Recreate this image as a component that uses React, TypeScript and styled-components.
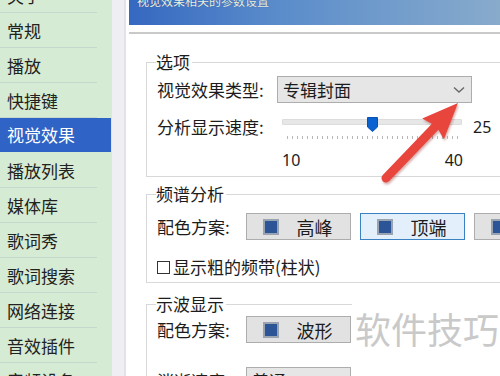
import React from "react";
import styled, { createGlobalStyle } from "styled-components";

const Global = createGlobalStyle`
  html, body { margin: 0; padding: 0; background: #ffffff; }
  body { font-family: "Noto Sans CJK SC", "Noto Sans", sans-serif; }
`;

const Page = styled.div`
  position: relative;
  width: 500px;
  height: 376px;
  overflow: hidden;
  display: flex;
  background: #ffffff;
  font-family: "Noto Sans CJK SC", "Noto Sans", sans-serif;
  color: #1c1c1c;
`;

const Sidebar = styled.div`
  width: 112px;
  flex: none;
  background: #d6ebd3;
  overflow: hidden;
`;

const NavList = styled.div`
  margin-top: -22px;
  display: flex;
  flex-direction: column;
`;

const NavItem = styled.div<{ $active?: boolean }>`
  flex: none;
  height: ${(p) => (p.$active ? "34px" : "35px")};
  margin-bottom: ${(p) => (p.$active ? "1px" : "0")};
  width: ${(p) => (p.$active ? "111px" : "97px")};
  box-sizing: border-box;
  padding-left: 7px;
  display: flex;
  align-items: center;
  font-size: 17px;
  line-height: 1;
  color: ${(p) => (p.$active ? "#ffffff" : "#222222")};
  background: ${(p) => (p.$active ? "#2f63c6" : "transparent")};
  border-bottom: 1px solid ${(p) => (p.$active ? "#2f63c6" : "#c4d8d0")};
`;

const Strip = styled.div`
  width: 12px;
  flex: none;
  background: #eeeef3;
  border-right: 2px solid #e2e2e8;
`;

const Content = styled.div`
  flex: 1;
  display: flex;
  flex-direction: column;
  padding-left: 3px;
  overflow: hidden;
`;

const Header = styled.div`
  flex: none;
  height: 25px;
  background: linear-gradient(90deg, #3568c0 0%, #5a8ccb 40%, #88abcc 100%);
  box-sizing: border-box;
  padding-left: 8px;
  display: flex;
  align-items: flex-start;
  overflow: hidden;
`;

const HeaderText = styled.span`
  margin-top: -6px;
  font-size: 12px;
  line-height: 14px;
  color: #e8f0e0;
  text-shadow: 0 0 1px #2a4f90;
`;

const Rule = styled.div`
  flex: none;
  margin-top: 7px;
  height: 2px;
  background: #c9c9c9;
`;

const Body = styled.div`
  flex: none;
  padding-left: 17px;
  display: flex;
  flex-direction: column;
`;

const Group = styled.fieldset<{ $top: number; $height: number }>`
  flex: none;
  margin: ${(p) => p.$top}px -20px 0 0;
  height: ${(p) => p.$height}px;
  box-sizing: border-box;
  border: 1px solid #d8d8d8;
  border-right: none;
  padding: 0 0 0 10px;
  min-width: 0;
`;

const Legend = styled.legend`
  font-size: 17px;
  line-height: 18px;
  padding: 0 2px 0 0;
  margin-left: -1px;
  color: #1c1c1c;
`;

const Row = styled.div<{ $mt: number }>`
  display: flex;
  align-items: center;
  margin-top: ${(p) => p.$mt}px;
`;

const Label = styled.span<{ $w: number }>`
  width: ${(p) => p.$w}px;
  flex: none;
  font-size: 17px;
  line-height: 20px;
  white-space: nowrap;
`;

const Combo = styled.div<{ $w: number }>`
  width: ${(p) => p.$w}px;
  height: 27px;
  flex: none;
  box-sizing: border-box;
  background: #e6e6e6;
  border: 1px solid #adadad;
  display: flex;
  align-items: center;
  justify-content: space-between;
  padding: 0 6px 0 5px;
  font-size: 17px;
`;

const SliderArea = styled.div`
  position: relative;
  width: 180px;
  height: 22px;
  margin-left: 5px;
  flex: none;
`;

const Track = styled.div`
  position: absolute;
  left: 0;
  right: 0;
  top: 3px;
  height: 4px;
  background: #e7e7e7;
  border: 1px solid #dcdcdc;
  border-radius: 1px;
`;

const Ticks = styled.div`
  position: absolute;
  left: 5px;
  right: 2px;
  top: 20px;
  height: 3px;
  background: repeating-linear-gradient(90deg, #b8b8b8 0 1px, transparent 1px 5px);
`;

const Thumb = styled.svg`
  position: absolute;
  left: 85px;
  top: 1px;
`;

const Value = styled.span`
  margin-left: 11px;
  font-family: "Noto Sans", sans-serif;
  font-size: 16px;
  line-height: 20px;
`;

const ScaleRow = styled.div`
  display: flex;
  justify-content: space-between;
  width: 181px;
  margin: 13px 0 0 125px;
  font-family: "Noto Sans", sans-serif;
  font-size: 16px;
  line-height: 18px;
`;

const SchemeButtons = styled.div`
  display: flex;
  gap: 9px;
`;

const SchemeButton = styled.div<{ $active?: boolean }>`
  width: 105px;
  height: 27px;
  flex: none;
  box-sizing: border-box;
  border: 1px solid ${(p) => (p.$active ? "#3b82c2" : "#adadad")};
  background: ${(p) => (p.$active ? "#e3f0fb" : "#e2e2e2")};
  display: flex;
  align-items: center;
  padding-left: 16px;
  font-size: 18px;
`;

const Swatch = styled.span`
  width: 16px;
  height: 16px;
  box-sizing: border-box;
  border: 2px solid #9aa3b0;
  background: #2c5597;
  flex: none;
`;

const SchemeText = styled.span`
  flex: 1;
  text-align: center;
`;

const CheckRow = styled.label`
  display: flex;
  align-items: center;
  gap: 3px;
  margin-top: 18px;
  font-size: 17px;
  line-height: 18px;
`;

const CheckBox = styled.span`
  width: 13px;
  height: 13px;
  box-sizing: border-box;
  border: 1px solid #333333;
  background: #ffffff;
  flex: none;
`;

const Watermark = styled.div`
  position: absolute;
  left: 352px;
  top: 298px;
  width: 150px;
  height: 60px;
  background: #ffffff;
  display: flex;
  align-items: center;
  padding-left: 3px;
  box-sizing: border-box;
  font-size: 36px;
  color: #c9c9c9;
  white-space: nowrap;
`;

const Arrow = styled.svg`
  position: absolute;
  left: 0;
  top: 0;
  pointer-events: none;
  filter: drop-shadow(1px 2px 1px rgba(140, 20, 20, 0.35));
`;

const navItems = [
  "关于",
  "常规",
  "播放",
  "快捷键",
  "视觉效果",
  "播放列表",
  "媒体库",
  "歌词秀",
  "歌词搜索",
  "网络连接",
  "音效插件",
  "音频设备",
];

export default function App() {
  return (
    <Page>
      <Global />
      <Sidebar>
        <NavList>
          {navItems.map((n) => (
            <NavItem key={n} $active={n === "视觉效果"}>
              {n}
            </NavItem>
          ))}
        </NavList>
      </Sidebar>
      <Strip />
      <Content>
        <Header>
          <HeaderText>视觉效果相关的参数设置</HeaderText>
        </Header>
        <Rule />
        <Body>
          <Group $top={19} $height={124}>
            <Legend>选项</Legend>
            <Row $mt={5}>
              <Label $w={120}>视觉效果类型:</Label>
              <Combo $w={195}>
                <span>专辑封面</span>
                <svg width="12" height="8" viewBox="0 0 12 8">
                  <path d="M1 1.5 L6 6 L11 1.5" fill="none" stroke="#6a6a6a" strokeWidth="1.5" />
                </svg>
              </Combo>
            </Row>
            <Row $mt={13}>
              <Label $w={120}>分析显示速度:</Label>
              <SliderArea>
                <Track />
                <Ticks />
                <Thumb width="11" height="15" viewBox="0 0 11 15">
                  <path d="M0.5 0.5 H10.5 V10 L5.5 14.5 L0.5 10 Z" fill="#0a62d2" stroke="#0a50b0" />
                </Thumb>
              </SliderArea>
              <Value>25</Value>
            </Row>
            <ScaleRow>
              <span>10</span>
              <span>40</span>
            </ScaleRow>
          </Group>
          <Group $top={8} $height={98}>
            <Legend>频谱分析</Legend>
            <Row $mt={10}>
              <Label $w={89}>配色方案:</Label>
              <SchemeButtons>
                <SchemeButton>
                  <Swatch />
                  <SchemeText>高峰</SchemeText>
                </SchemeButton>
                <SchemeButton $active>
                  <Swatch />
                  <SchemeText>顶端</SchemeText>
                </SchemeButton>
                <SchemeButton>
                  <Swatch />
                  <SchemeText>曲线</SchemeText>
                </SchemeButton>
              </SchemeButtons>
            </Row>
            <CheckRow>
              <CheckBox />
              显示粗的频带(柱状)
            </CheckRow>
          </Group>
          <Group $top={12} $height={90}>
            <Legend>示波显示</Legend>
            <Row $mt={3}>
              <Label $w={89}>配色方案:</Label>
              <SchemeButton>
                <Swatch />
                <SchemeText>波形</SchemeText>
              </SchemeButton>
            </Row>
            <Row $mt={24}>
              <Label $w={89}>消逝速度:</Label>
              <Combo $w={105}>
                <span>普通</span>
              </Combo>
            </Row>
          </Group>
        </Body>
      </Content>
      <Watermark>软件技巧</Watermark>
      <Arrow width="500" height="376" viewBox="0 0 500 376">
        <g transform="translate(386 178) rotate(-46.2)">
          <path
            d="M0 -4.5 L71 -4.5 L68 -15 L104 0 L68 15 L71 4.5 L0 4.5 A4.5 4.5 0 0 1 0 -4.5 Z"
            fill="#e8453c"
          />
        </g>
      </Arrow>
    </Page>
  );
}
